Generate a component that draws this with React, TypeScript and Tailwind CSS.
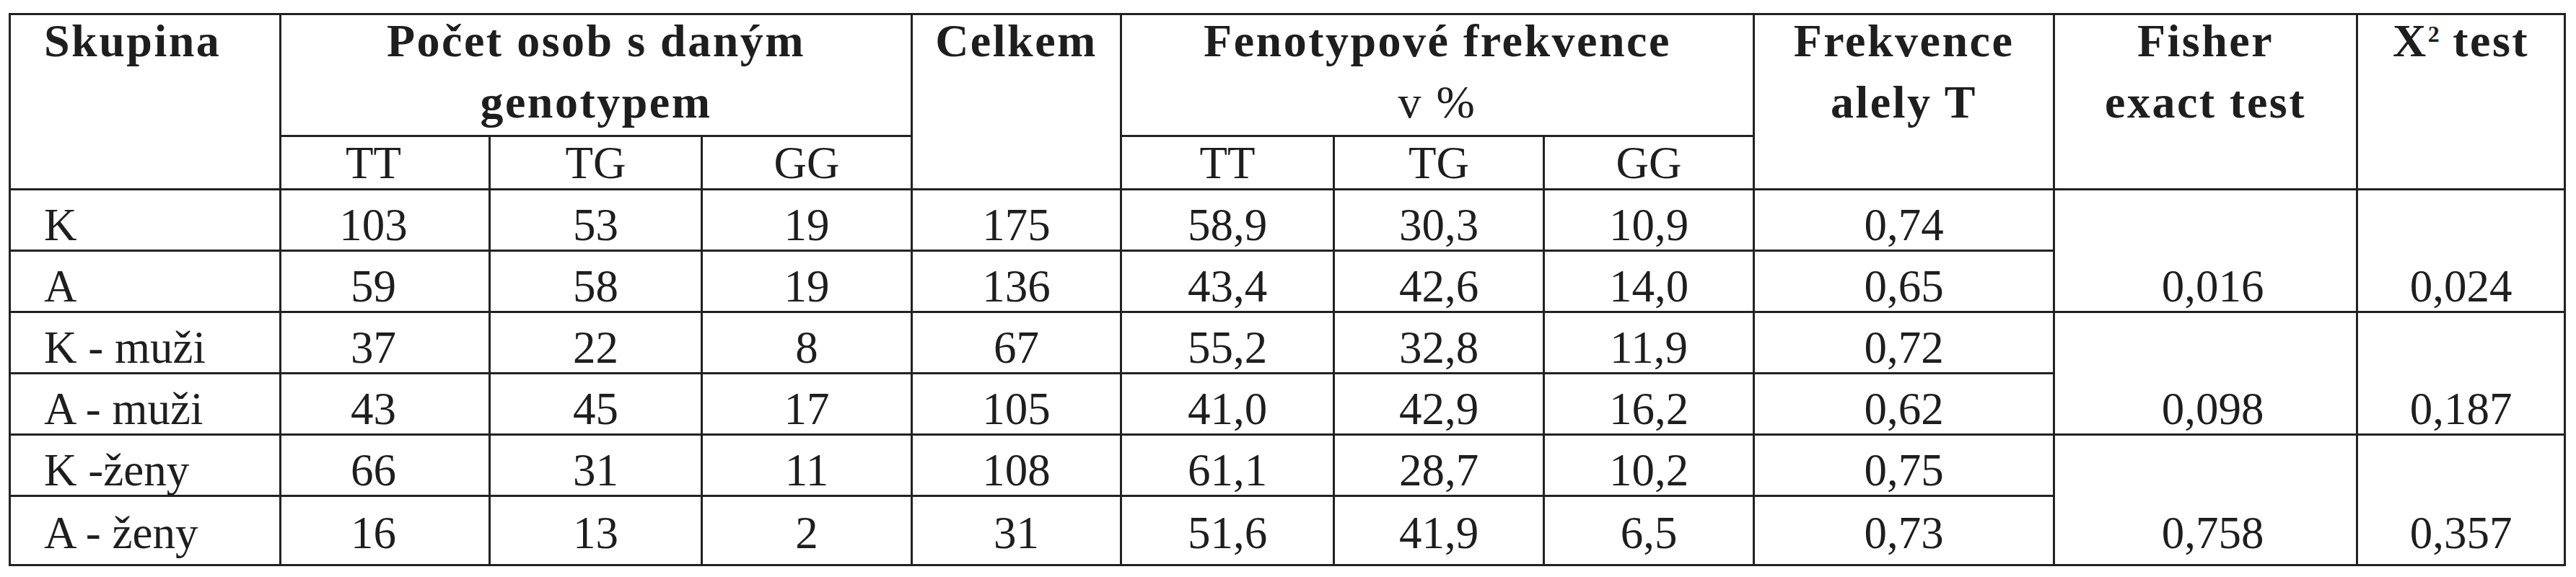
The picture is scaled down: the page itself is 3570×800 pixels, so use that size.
import React from 'react';

type Row = {
  label: string;
  counts: string[];
  total: string;
  freq: string[];
  allele: string;
  fisher?: string;
  chi?: string;
  last?: boolean;
};

const rows: Row[] = [
  { label: 'K', counts: ['103', '53', '19'], total: '175', freq: ['58,9', '30,3', '10,9'], allele: '0,74', fisher: '0,016', chi: '0,024' },
  { label: 'A', counts: ['59', '58', '19'], total: '136', freq: ['43,4', '42,6', '14,0'], allele: '0,65' },
  { label: 'K - muži', counts: ['37', '22', '8'], total: '67', freq: ['55,2', '32,8', '11,9'], allele: '0,72', fisher: '0,098', chi: '0,187' },
  { label: 'A - muži', counts: ['43', '45', '17'], total: '105', freq: ['41,0', '42,9', '16,2'], allele: '0,62' },
  { label: 'K -ženy', counts: ['66', '31', '11'], total: '108', freq: ['61,1', '28,7', '10,2'], allele: '0,75', fisher: '0,758', chi: '0,357' },
  { label: 'A - ženy', counts: ['16', '13', '2'], total: '31', freq: ['51,6', '41,9', '6,5'], allele: '0,73', last: true },
];

const cell = 'border-[3px] border-[#222] p-0';
const head = `${cell} align-top text-center font-bold text-[64px] leading-[72px] tracking-[2.5px]`;
const sub = `${cell} align-bottom text-center font-normal text-[63px] leading-none pb-[3px]`;

function Head({ first, second }: { first: React.ReactNode; second?: React.ReactNode }) {
  return (
    <>
      <div>{first}</div>
      {second && <div className="mt-[13px]">{second}</div>}
    </>
  );
}

export default function App() {
  return (
    <div className="min-h-screen bg-white pt-[18px] pl-[12px] text-[#1e1e1e] [font-family:'Liberation_Serif',serif]">
      <table className="table-fixed border-collapse w-[3544px]">
        <colgroup>
          <col className="w-[375px]" />
          <col className="w-[290px]" />
          <col className="w-[294px]" />
          <col className="w-[291px]" />
          <col className="w-[290px]" />
          <col className="w-[295px]" />
          <col className="w-[291px]" />
          <col className="w-[291px]" />
          <col className="w-[416px]" />
          <col className="w-[420px]" />
          <col className="w-[288px]" />
        </colgroup>
        <thead>
          <tr className="h-[169px]">
            <th rowSpan={2} className={`${head} text-left pl-[46px]`}>
              <Head first="Skupina" />
            </th>
            <th colSpan={3} className={head}>
              <Head first="Počet osob s daným" second="genotypem" />
            </th>
            <th rowSpan={2} className={head}>
              <Head first="Celkem" />
            </th>
            <th colSpan={3} className={head}>
              <Head first="Fenotypové frekvence" second={<span className="font-normal">v %</span>} />
            </th>
            <th rowSpan={2} className={head}>
              <Head first="Frekvence" second="alely T" />
            </th>
            <th rowSpan={2} className={head}>
              <Head first="Fisher" second="exact test" />
            </th>
            <th rowSpan={2} className={head}>
              <Head
                first={
                  <>
                    X<sup className="top-0 text-[32px] leading-none tracking-normal align-[20px]">2</sup> test
                  </>
                }
              />
            </th>
          </tr>
          <tr className="h-[74px]">
            <th className={`${sub} pr-[32px]`}>TT</th>
            <th className={sub}>TG</th>
            <th className={sub}>GG</th>
            <th className={sub}>TT</th>
            <th className={sub}>TG</th>
            <th className={sub}>GG</th>
          </tr>
        </thead>
        <tbody className="text-[63px] leading-none">
          {rows.map((r) => {
            const pad = r.last ? 'pb-[11px]' : 'pb-[2px]';
            const mergedPad = r.label === 'K -ženy' ? 'pb-[11px]' : 'pb-[2px]';
            const c = `${cell} align-bottom text-center ${pad}`;
            return (
              <tr key={r.label} className={r.last ? 'h-[96px]' : 'h-[85px]'}>
                <td className={`${cell} align-bottom text-left pl-[46px] ${pad}`}>{r.label}</td>
                <td className={`${c} pr-[32px]`}>{r.counts[0]}</td>
                <td className={c}>{r.counts[1]}</td>
                <td className={c}>{r.counts[2]}</td>
                <td className={c}>{r.total}</td>
                {r.freq.map((f, i) => (
                  <td key={i} className={c}>
                    {f}
                  </td>
                ))}
                <td className={c}>{r.allele}</td>
                {r.fisher && (
                  <>
                    <td rowSpan={2} className={`${cell} align-bottom text-center pl-[20px] ${mergedPad}`}>
                      {r.fisher}
                    </td>
                    <td rowSpan={2} className={`${cell} align-bottom text-center ${mergedPad}`}>
                      {r.chi}
                    </td>
                  </>
                )}
              </tr>
            );
          })}
        </tbody>
      </table>
    </div>
  );
}
